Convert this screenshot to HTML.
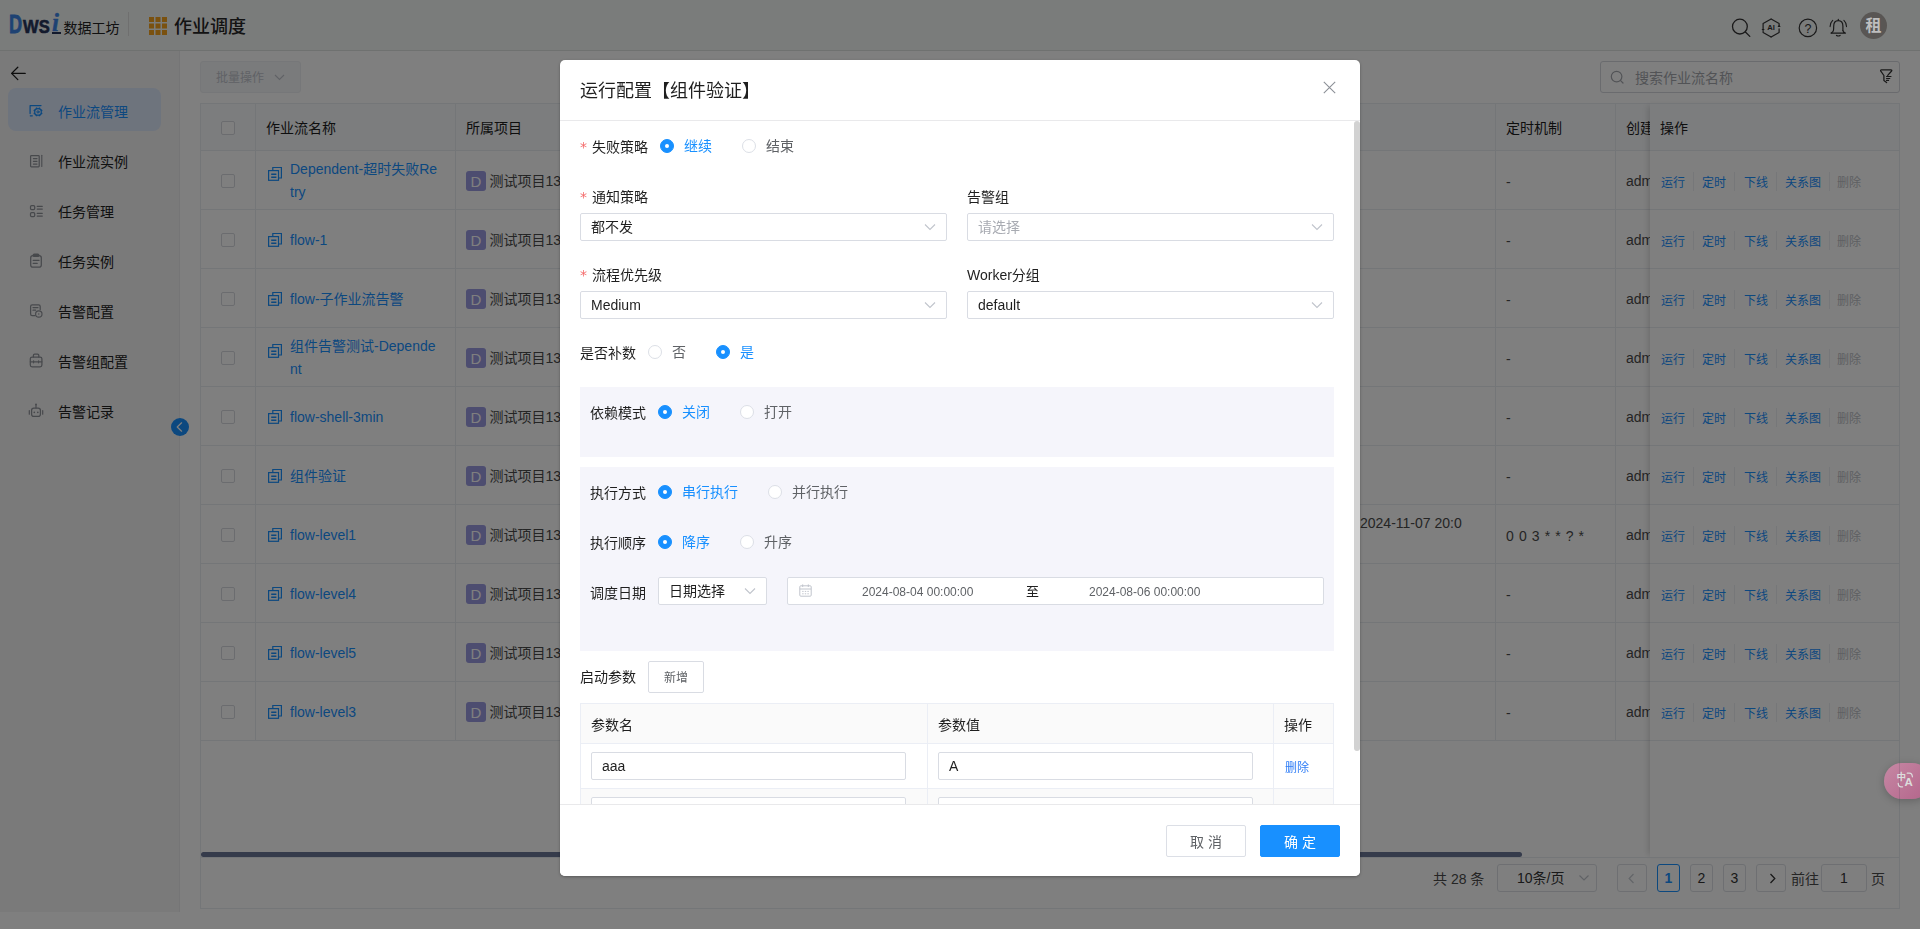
<!DOCTYPE html>
<html lang="zh-CN">
<head>
<meta charset="utf-8">
<title>作业调度</title>
<style>
*{box-sizing:border-box;margin:0;padding:0}
html,body{width:1920px;height:929px;overflow:hidden;background:#fff}
body{font-family:"Liberation Sans","Noto Sans CJK SC",sans-serif;font-size:14px;color:#333;position:relative}
svg{display:block}
/* ---------- header ---------- */
#hdr{position:absolute;left:0;top:0;width:1920px;height:51px;background:#f5f8f7;border-bottom:1px solid #dfe2e1;z-index:2}
#logo{position:absolute;left:9px;top:8px;height:30px;white-space:nowrap;line-height:30px}
#logo span{position:absolute;display:block;line-height:1}
#logo .d{font-family:"Liberation Sans",sans-serif;font-weight:bold;font-size:26px;color:#3d85e6;left:0px;top:3px;transform:scaleX(.7);transform-origin:0 50%;-webkit-text-stroke:.8px #3d85e6}
#logo .ws{font-family:"Liberation Sans",sans-serif;font-weight:bold;font-size:19px;color:#27345a;left:13.5px;top:9px;transform:scaleX(.87);transform-origin:0 50%;-webkit-text-stroke:.6px #27345a;letter-spacing:.3px}
#logo .i{font-family:"Liberation Serif",serif;font-style:italic;font-weight:bold;font-size:25px;color:#3d85e6;left:43px;top:2px;-webkit-text-stroke:.4px #3d85e6}
#logo .u{left:43px;top:24px;width:9px;height:1.5px;background:#27345a}
#logo .cn{left:54.5px;top:10px;font-size:14px;color:#222;letter-spacing:0;line-height:20px}
#hdr .vdiv{position:absolute;left:128px;top:12px;width:1px;height:24px;background:#dedede}
#hdr .grid{position:absolute;left:149px;top:17px}
#hdr .ttl{position:absolute;left:174px;top:13px;font-size:18px;line-height:28px;color:#262626;font-weight:500}
#hdr .ics{position:absolute;left:1725px;top:14px}
#ava{position:absolute;left:1860px;top:12px;width:27px;height:27px;border-radius:50%;background:#595654;color:#bebebe;font-size:16px;font-weight:bold;line-height:28px;text-align:center;z-index:6}
/* ---------- sidebar ---------- */
#side{position:absolute;left:0;top:51px;width:180px;height:861px;background:#f5f5f5;border-right:1px solid #ebebed}
#side .mi{position:absolute;left:8px;width:153px;height:43px;border-radius:8px;line-height:48px;font-size:14px;color:#222;padding-left:50px;white-space:nowrap}
#side .mi.on{background:#dde8fb;color:#1890ff}
#side .sic{position:absolute;left:0;top:0;z-index:1}
#coll{position:absolute;left:171px;top:418px;width:18px;height:18px;border-radius:50%;background:#1890ff}
#coll svg{position:absolute;left:5px;top:4px}
/* ---------- main ---------- */
#main{position:absolute;left:180px;top:51px;width:1740px;height:878px;background:#fff}
#card{position:absolute;left:20px;top:0;width:1700px;height:858px}
.btn-batch{position:absolute;left:0;top:10px;width:101px;height:32px;border-radius:3px;background:#f5f6f8;border:1px solid #eceef2;color:#c0c4cc;font-size:12px;line-height:32px;padding-left:15px}
.btn-batch svg{position:absolute;left:73px;top:12px}
.srch{position:absolute;left:1400px;top:10px;width:300px;height:32px;border:1px solid #d4d7dd;border-radius:3px;background:#fff}
.srch .ph{position:absolute;left:34px;top:1px;line-height:30px;font-size:14px;color:#a4a7ad;white-space:nowrap}
.srch svg{position:absolute}
/* table */
#tbl{position:absolute;left:0;top:52px;width:1700px;height:755px;border-top:1px solid #e9ecf1;border-left:1px solid #e9ecf1;border-right:1px solid #e9ecf1}
#tbl .hd{position:absolute;left:0;top:0;width:1698px;height:47px;background:#f8fafc;border-bottom:1px solid #e9ecf1}
#tbl .row{position:absolute;left:0;width:1698px;height:59px;border-bottom:1px solid #e9ecf1}
#tbl .vl{position:absolute;top:0;width:1px;height:637px;background:#e9ecf1}
#tbl .th{position:absolute;top:1px;line-height:47px;font-size:14px;color:#1c1c1c;white-space:nowrap}
.cb{position:absolute;left:20px;width:14px;height:14px;border:1px solid #d6d9df;border-radius:2px;background:#fff}
.nm{position:absolute;left:89px;width:150px;font-size:14px;line-height:23px;color:#1890ff;word-break:break-all}
.nmi{position:absolute;left:66px}
.pj{position:absolute;left:265px;width:20px;height:20px;border-radius:3px;background:#9a9ae0;color:#fff;font-size:15px;line-height:21px;text-align:center}
.pjt{position:absolute;left:288.5px;font-size:14px;line-height:20px;color:#4a4a4a;white-space:nowrap}
.cell{position:absolute;font-size:14px;line-height:20px;color:#4a4a4a;white-space:nowrap}
.adm{position:absolute;left:1425px;width:26px;overflow:hidden;font-size:14px;line-height:20px;color:#4a4a4a;white-space:nowrap}
#fix{position:absolute;left:1450px;top:52px;width:249px;height:755px;box-shadow:-5px 0 6px -3px rgba(0,0,0,.14);border-top:1px solid #e9ecf1}
#fix .hd{position:absolute;left:0;top:0;width:249px;height:47px;background:#f8fafc;border-bottom:1px solid #e9ecf1;line-height:49px;padding-left:10px;font-size:14px;color:#1c1c1c}
#fix .row{position:absolute;left:0;width:249px;height:59px;border-bottom:1px solid #e9ecf1;background:#fff}
.ops{position:absolute;left:0;width:252px;height:20px;font-size:12px;line-height:20px;white-space:nowrap}
.ops a{position:absolute;top:0;color:#1890ff;text-decoration:none}
.ops a.dis{color:#bcbfc5}
.ops i{position:absolute;top:-1px;width:1px;height:19px;background:#eceef2}
#hsb{position:absolute;left:1px;top:801px;width:1321px;height:5px;border-radius:3px;background:#6a7696}
/* pagination */
#pg{position:absolute;left:0;top:806px;width:1700px;height:52px;border:1px solid #e9ecf1;font-size:14px;color:#4a4a4a}
#pg .t{position:absolute;top:7px;line-height:28px;white-space:nowrap}
#pg .b{position:absolute;top:6px;height:28px;border:1px solid #dcdfe4;border-radius:3px;background:#fff;text-align:center;line-height:27px;font-size:14px;color:#333}
#pg .b.on{border-color:#1890ff;color:#1890ff;font-weight:bold}
#pg .b svg{position:absolute}
/* ---------- mask ---------- */
#mask{position:absolute;left:0;top:0;width:1920px;height:929px;background:rgba(0,0,0,.5);z-index:5}
#trans{position:absolute;left:1884px;top:763px;width:46px;height:36px;border-radius:18px;background:linear-gradient(135deg,#c688a4,#b3648a);box-shadow:0 2px 8px rgba(0,0,0,.22);z-index:7;color:#dcdcdc;font-weight:bold}
#trans span{position:absolute;line-height:1}
#trans i{position:absolute;left:15px;top:0;width:1px;height:36px;background:rgba(60,60,80,.18)}
#trans svg{position:absolute;left:0;top:0}

/* ---------- modal ---------- */
#modal{position:absolute;left:560px;top:60px;width:800px;height:816px;background:#fff;border-radius:5px;box-shadow:0 1px 3px rgba(0,0,0,.3);overflow:hidden;color:#1f1f1f;z-index:8;will-change:transform}
#modal .mh{position:absolute;left:0;top:0;width:800px;height:61px;border-bottom:1px solid #e9e9eb}
#modal .mh .tt{position:absolute;left:20px;top:17px;font-size:18px;line-height:28px;color:#1f1f1f;white-space:nowrap}
#modal .mh svg{position:absolute;left:763px;top:21px}
#modal .mf{position:absolute;left:0;top:744px;width:800px;height:72px;border-top:1px solid #e9e9eb;background:#fff}
#modal .mf .bt{position:absolute;top:20px;width:80px;height:32px;border-radius:2px;font-size:14px;line-height:32px;text-align:center;border:1px solid #dcdfe6;color:#5f6266;background:#fff;letter-spacing:0}
#modal .mf .bt.pr{background:#1890ff;border-color:#1890ff;color:#fff}
#mb{position:absolute;left:0;top:61px;width:800px;height:683px;overflow:hidden}
#mb .sb{position:absolute;left:794px;top:0;width:6px;height:630px;border-radius:3px;background:#d2d2d2}
#mb .lb{position:absolute;font-size:14px;line-height:20px;white-space:nowrap;color:#1f1f1f}
#mb .lb b{font-weight:normal;color:#f56c6c;font-family:"DejaVu Sans",sans-serif;font-size:14px;display:inline-block;width:12px;position:relative;top:0}
#mb .rd{position:absolute;width:14px;height:14px;border-radius:50%;border:1px solid #dcdfe6;background:#fff}
#mb .rd.on{border-color:#1890ff;background:#1890ff}
#mb .rd.on::after{content:"";position:absolute;left:4px;top:4px;width:4px;height:4px;border-radius:50%;background:#fff}
#mb .rt{position:absolute;font-size:14px;line-height:20px;color:#5f6266;white-space:nowrap}
#mb .rt.on{color:#1890ff}
#mb .sel{position:absolute;height:28px;border:1px solid #d9dce3;border-radius:2px;background:#fff;font-size:14px;line-height:27px;padding-left:10px;color:#1f1f1f;white-space:nowrap}
#mb .sel.ph{color:#a8abb2}
#mb .sel svg{position:absolute;right:10px;top:9px}
#mb .blk{position:absolute;left:20px;width:754px;background:#f5f5fb}
#mb .dt{position:absolute;font-size:12px;line-height:28px;color:#5f6266;white-space:nowrap}
#mb .pt{position:absolute;left:20px;top:582px;width:754px;height:120px;border:1px solid #ebeef5;border-bottom:0;border-right:0}
#mb .pt .c{position:absolute;border-right:1px solid #ebeef5;border-bottom:1px solid #ebeef5}
#mb .pt .h{background:#fafafa;font-size:14px;line-height:43px;padding-left:10px;color:#1f1f1f}
#mb .pt .in{position:absolute;left:10px;top:8px;height:28px;border:1px solid #d9dce3;border-radius:2px;background:#fff;font-size:14px;line-height:26px;padding-left:10px;color:#1f1f1f}
</style>
</head>
<body>
<div id="hdr">
  <div id="logo"><span class="d">D</span><span class="ws">WS</span><span class="i">i</span><span class="u"></span><span class="cn">数据工坊</span></div>
  <div class="vdiv"></div>
  <svg class="grid" width="18" height="18" viewBox="0 0 18 18"><g fill="#f5a31f"><rect x="0.0" y="0.0" width="5" height="5"/><rect x="6.5" y="0.0" width="5" height="5"/><rect x="13.0" y="0.0" width="5" height="5"/><rect x="0.0" y="6.5" width="5" height="5"/><rect x="6.5" y="6.5" width="5" height="5"/><rect x="13.0" y="6.5" width="5" height="5"/><rect x="0.0" y="13.0" width="5" height="5"/><rect x="6.5" y="13.0" width="5" height="5"/><rect x="13.0" y="13.0" width="5" height="5"/></g></svg>
  <div class="ttl">作业调度</div>
  <svg class="ics" width="125" height="26" viewBox="0 0 125 26" fill="none" stroke="#333" stroke-width="1.3" stroke-linecap="round" stroke-linejoin="round"><circle cx="14.9" cy="12.6" r="7.4"/><path d="M20.4 18.0 L24.8 22.4"/><path d="M38.1 15.1 L38.1 9.4 L46.1 4.9 M46.1 4.9 L54.1 9.4 L54.1 11.7 L54.1 11.7 M54.1 14.9 L54.1 18.4 L46.1 22.9" stroke-width="1.2"/><path d="M46.1 22.9 L38.1 18.4 L38.1 17.4" stroke-width="1.2"/><path d="M54.1 10.7 l1.6 2.4 l-3.2 0z M38.1 17.3 l1.6 -2.4 l-3.2 0z" fill="#333" stroke="none"/><text x="46.1" y="16.2" font-family="Liberation Sans, sans-serif" font-weight="bold" font-size="7.6" fill="#333" stroke="none" text-anchor="middle">AI</text><circle cx="82.9" cy="13.9" r="8.7" stroke-width="1.2"/><text x="82.9" y="18.5" font-family="Liberation Sans, sans-serif" font-size="12.5" fill="#333" stroke="none" text-anchor="middle">?</text><path d="M113.3 5.3 L113.3 6.6 M106.3 19.0 C108.7 17.6 108.7 16.5 108.7 12.2 C108.7 8.6 110.9 6.7 113.3 6.7 L113.3 6.7 M113.3 6.7 C115.7 6.7 117.9 8.6 117.9 12.2 L117.9 16.5" stroke-width="1.2"/><path d="M117.9 16.5 C117.9 17.6 118.9 18.4 120.3 19.0 M106.1 19.1 L120.5 19.1 M111.5 21.4 Q113.3 22.6 115.1 21.4" stroke-width="1.2"/><path d="M107.7 6.3 Q105.0 8.8 105.1 12.6 M118.9 6.3 Q121.6 8.8 121.5 12.6" stroke-width="1.1"/></svg>
</div>
<div id="ava">租</div>
<div id="side">
<svg class="sic" width="60" height="400" viewBox="0 0 60 400" fill="none" stroke="#8f9299" stroke-width="1.25" stroke-linecap="round" stroke-linejoin="round"><path d="M11.6 22.4 L25.2 22.4 M17.8 16.2 L11.6 22.4 L17.8 28.6" stroke="#1a1a1a" stroke-width="1.3"/><path d="M30.1 62.6 L30.1 54.5 L41.0 54.5 M30.3 64.8 L32.3 64.8" stroke="#1890ff"/><circle cx="38.0" cy="60.9" r="3.3" stroke="#1890ff" stroke-width="1.2"/><path d="M41.05 62.16 L42.25 62.66 M39.26 63.95 L39.76 65.15 M36.74 63.95 L36.24 65.15 M34.95 62.16 L33.75 62.66 M34.95 59.64 L33.75 59.14 M36.74 57.85 L36.24 56.65 M39.26 57.85 L39.76 56.65 M41.05 59.64 L42.25 59.14" stroke="#1890ff" stroke-width="1.7" stroke-linecap="butt"/><circle cx="38.0" cy="60.9" r="1.1" stroke="#1890ff" stroke-width="1"/><rect x="30.6" y="104.5" width="8.6" height="11.4" rx=".8"/><path d="M33.4 107.6 H37 M33.4 110.3 H37 M33.4 113.1 H37" stroke-width="1.2"/><path d="M41.8 104.2 V115.4" stroke-width="1.1"/><rect x="30.5" y="154.6" width="4.2" height="4" rx="1.1"/><rect x="30.5" y="161.6" width="4.2" height="4" rx="1.1"/><path d="M37.2 155.3 H42.3 M37.2 158.1 H42.3 M37.2 162.3 H42.3 M37.2 165.1 H42.3" stroke-width="1.2"/><rect x="30.7" y="204.6" width="10.6" height="11.6" rx="2.2"/><rect x="33.2" y="203.0" width="5.6" height="2.4" rx="1" fill="#8f9299"/><path d="M33.2 209.4 H39 M33.2 212.4 H37.2" stroke-width="1.2"/><path d="M35.0 264.6 H32.2 Q30.6 264.6 30.6 263.0 V255.4 Q30.6 253.8 32.2 253.8 H38.6 Q40.2 253.8 40.2 255.4 V258.6"/><path d="M33.0 256.6 H38 M33.0 259.2 H35.6" stroke-width="1.2"/><circle cx="38.8" cy="263.0" r="3.2" stroke-width="1.15"/><circle cx="38.8" cy="263.0" r=".7" fill="#8f9299" stroke="none"/><rect x="30.3" y="306.0" width="11.6" height="9.8" rx="1.8"/><path d="M33.4 306.0 V304.2 Q33.4 303.2 34.6 303.2 H37.6 Q38.8 303.2 38.8 304.2 V306.0"/><path d="M30.3 310.8 H41.9 M33.6 309.8 V311.8 M38.6 309.8 V311.8" stroke-width="1.15"/><rect x="31.6" y="357.0" width="8.8" height="8.4" rx="2.2"/><path d="M36.0 354.4 V357.0 M29.3 359.6 V363.2 M42.7 359.6 V363.2" stroke-width="1.2"/><circle cx="36" cy="353.6" r="1" fill="#8f9299" stroke="none"/><circle cx="34.3" cy="361.3" r=".85" fill="#8f9299" stroke="none"/><circle cx="37.8" cy="361.3" r=".85" fill="#8f9299" stroke="none"/></svg>
<div class="mi on" style="top:37px">作业流管理</div>
<div class="mi" style="top:87px">作业流实例</div>
<div class="mi" style="top:137px">任务管理</div>
<div class="mi" style="top:187px">任务实例</div>
<div class="mi" style="top:237px">告警配置</div>
<div class="mi" style="top:287px">告警组配置</div>
<div class="mi" style="top:337px">告警记录</div>
</div>
<div id="main">
  <div id="card">
    <div class="btn-batch">批量操作<svg width="11" height="7" viewBox="0 0 11 7" fill="none" stroke="#c0c4cc" stroke-width="1.1"><path d="M1 1l4.5 4.5L10 1"/></svg></div>
    <div class="srch"><svg style="left:9px;top:8px" width="15" height="15" viewBox="0 0 15 15" fill="none" stroke="#a4a7ad" stroke-width="1.2" stroke-linecap="round"><circle cx="6.6" cy="6.6" r="5.3"/><path d="M10.6 10.6l2.4 2.4"/></svg><span class="ph">搜索作业流名称</span><svg style="left:279px;top:7px" width="14" height="16" viewBox="0 0 14 16" fill="none" stroke="#333" stroke-width="1.25" stroke-linejoin="round" stroke-linecap="round"><path d="M7.7 6.4L11.6 2Q12.2 .9 10.9 .9H1.4Q.2 .9 .8 2.1L3.9 6.5V11.4L6.6 13.5"/><path d="M6.5 7.5H11M6.5 9.5H9.8M6.5 11.4H8.6" stroke-width="1.1"/></svg></div>
    <div id="tbl"><div class="hd"></div>
<div class="cb" style="top:17px"></div>
<div class="th" style="left:65px">作业流名称</div>
<div class="th" style="left:265px">所属项目</div>
<div class="th" style="left:1305px">定时机制</div>
<div class="th" style="left:1425px;width:26px;overflow:hidden">创建人</div>
<div class="vl" style="left:54px"></div>
<div class="vl" style="left:254px"></div>
<div class="vl" style="left:1294px"></div>
<div class="vl" style="left:1414px"></div>
<div class="row" style="top:47px"></div>
<div class="cb" style="top:70px"></div>
<svg class="nmi" style="top:62px" width="16" height="16" viewBox="0 0 16 16" fill="none" stroke="#1890ff" stroke-width="1.2"><path d="M5.8 4.4V1.5h8.6V12h-2.7"/><rect x="1.6" y="4.6" width="9.9" height="9.7"/><path d="M4.2 8.2h5.2M4.2 11.2h5.2" stroke-width="1.5"/></svg>
<div class="nm" style="top:54px">Dependent-超时失败Re<br>try</div>
<div class="pj" style="top:67px">D</div>
<div class="pjt" style="top:67px">测试项目1375</div>
<div class="cell" style="left:1305px;top:68px;word-spacing:1.2px">-</div>
<div class="adm" style="top:67px">admin</div>
<div class="row" style="top:106px"></div>
<div class="cb" style="top:129px"></div>
<svg class="nmi" style="top:128px" width="16" height="16" viewBox="0 0 16 16" fill="none" stroke="#1890ff" stroke-width="1.2"><path d="M5.8 4.4V1.5h8.6V12h-2.7"/><rect x="1.6" y="4.6" width="9.9" height="9.7"/><path d="M4.2 8.2h5.2M4.2 11.2h5.2" stroke-width="1.5"/></svg>
<div class="nm" style="top:125px">flow-1</div>
<div class="pj" style="top:126px">D</div>
<div class="pjt" style="top:126px">测试项目1375</div>
<div class="cell" style="left:1305px;top:127px;word-spacing:1.2px">-</div>
<div class="adm" style="top:126px">admin</div>
<div class="row" style="top:165px"></div>
<div class="cb" style="top:188px"></div>
<svg class="nmi" style="top:187px" width="16" height="16" viewBox="0 0 16 16" fill="none" stroke="#1890ff" stroke-width="1.2"><path d="M5.8 4.4V1.5h8.6V12h-2.7"/><rect x="1.6" y="4.6" width="9.9" height="9.7"/><path d="M4.2 8.2h5.2M4.2 11.2h5.2" stroke-width="1.5"/></svg>
<div class="nm" style="top:184px">flow-子作业流告警</div>
<div class="pj" style="top:185px">D</div>
<div class="pjt" style="top:185px">测试项目1375</div>
<div class="cell" style="left:1305px;top:186px;word-spacing:1.2px">-</div>
<div class="adm" style="top:185px">admin</div>
<div class="row" style="top:224px"></div>
<div class="cb" style="top:247px"></div>
<svg class="nmi" style="top:239px" width="16" height="16" viewBox="0 0 16 16" fill="none" stroke="#1890ff" stroke-width="1.2"><path d="M5.8 4.4V1.5h8.6V12h-2.7"/><rect x="1.6" y="4.6" width="9.9" height="9.7"/><path d="M4.2 8.2h5.2M4.2 11.2h5.2" stroke-width="1.5"/></svg>
<div class="nm" style="top:231px">组件告警测试-Depende<br>nt</div>
<div class="pj" style="top:244px">D</div>
<div class="pjt" style="top:244px">测试项目1375</div>
<div class="cell" style="left:1305px;top:245px;word-spacing:1.2px">-</div>
<div class="adm" style="top:244px">admin</div>
<div class="row" style="top:283px"></div>
<div class="cb" style="top:306px"></div>
<svg class="nmi" style="top:305px" width="16" height="16" viewBox="0 0 16 16" fill="none" stroke="#1890ff" stroke-width="1.2"><path d="M5.8 4.4V1.5h8.6V12h-2.7"/><rect x="1.6" y="4.6" width="9.9" height="9.7"/><path d="M4.2 8.2h5.2M4.2 11.2h5.2" stroke-width="1.5"/></svg>
<div class="nm" style="top:302px">flow-shell-3min</div>
<div class="pj" style="top:303px">D</div>
<div class="pjt" style="top:303px">测试项目1375</div>
<div class="cell" style="left:1305px;top:304px;word-spacing:1.2px">-</div>
<div class="adm" style="top:303px">admin</div>
<div class="row" style="top:342px"></div>
<div class="cb" style="top:365px"></div>
<svg class="nmi" style="top:364px" width="16" height="16" viewBox="0 0 16 16" fill="none" stroke="#1890ff" stroke-width="1.2"><path d="M5.8 4.4V1.5h8.6V12h-2.7"/><rect x="1.6" y="4.6" width="9.9" height="9.7"/><path d="M4.2 8.2h5.2M4.2 11.2h5.2" stroke-width="1.5"/></svg>
<div class="nm" style="top:361px">组件验证</div>
<div class="pj" style="top:362px">D</div>
<div class="pjt" style="top:362px">测试项目1375</div>
<div class="cell" style="left:1305px;top:363px;word-spacing:1.2px">-</div>
<div class="adm" style="top:362px">admin</div>
<div class="row" style="top:401px"></div>
<div class="cb" style="top:424px"></div>
<svg class="nmi" style="top:423px" width="16" height="16" viewBox="0 0 16 16" fill="none" stroke="#1890ff" stroke-width="1.2"><path d="M5.8 4.4V1.5h8.6V12h-2.7"/><rect x="1.6" y="4.6" width="9.9" height="9.7"/><path d="M4.2 8.2h5.2M4.2 11.2h5.2" stroke-width="1.5"/></svg>
<div class="nm" style="top:420px">flow-level1</div>
<div class="pj" style="top:421px">D</div>
<div class="pjt" style="top:421px">测试项目1375</div>
<div class="cell" style="left:1305px;top:422px;word-spacing:1.2px">0 0 3 * * ? *</div>
<div class="cell" style="left:1159px;top:409px">2024-11-07 20:0</div>
<div class="adm" style="top:421px">admin</div>
<div class="row" style="top:460px"></div>
<div class="cb" style="top:483px"></div>
<svg class="nmi" style="top:482px" width="16" height="16" viewBox="0 0 16 16" fill="none" stroke="#1890ff" stroke-width="1.2"><path d="M5.8 4.4V1.5h8.6V12h-2.7"/><rect x="1.6" y="4.6" width="9.9" height="9.7"/><path d="M4.2 8.2h5.2M4.2 11.2h5.2" stroke-width="1.5"/></svg>
<div class="nm" style="top:479px">flow-level4</div>
<div class="pj" style="top:480px">D</div>
<div class="pjt" style="top:480px">测试项目1375</div>
<div class="cell" style="left:1305px;top:481px;word-spacing:1.2px">-</div>
<div class="adm" style="top:480px">admin</div>
<div class="row" style="top:519px"></div>
<div class="cb" style="top:542px"></div>
<svg class="nmi" style="top:541px" width="16" height="16" viewBox="0 0 16 16" fill="none" stroke="#1890ff" stroke-width="1.2"><path d="M5.8 4.4V1.5h8.6V12h-2.7"/><rect x="1.6" y="4.6" width="9.9" height="9.7"/><path d="M4.2 8.2h5.2M4.2 11.2h5.2" stroke-width="1.5"/></svg>
<div class="nm" style="top:538px">flow-level5</div>
<div class="pj" style="top:539px">D</div>
<div class="pjt" style="top:539px">测试项目1375</div>
<div class="cell" style="left:1305px;top:540px;word-spacing:1.2px">-</div>
<div class="adm" style="top:539px">admin</div>
<div class="row" style="top:578px"></div>
<div class="cb" style="top:601px"></div>
<svg class="nmi" style="top:600px" width="16" height="16" viewBox="0 0 16 16" fill="none" stroke="#1890ff" stroke-width="1.2"><path d="M5.8 4.4V1.5h8.6V12h-2.7"/><rect x="1.6" y="4.6" width="9.9" height="9.7"/><path d="M4.2 8.2h5.2M4.2 11.2h5.2" stroke-width="1.5"/></svg>
<div class="nm" style="top:597px">flow-level3</div>
<div class="pj" style="top:598px">D</div>
<div class="pjt" style="top:598px">测试项目1375</div>
<div class="cell" style="left:1305px;top:599px;word-spacing:1.2px">-</div>
<div class="adm" style="top:598px">admin</div></div>
    <div id="fix"><div class="hd">操作</div>
<div class="row" style="top:47px"></div>
<div class="ops" style="top:69px"><a style="left:11px">运行</a><i style="left:43px"></i><a style="left:52px">定时</a><i style="left:84px"></i><a style="left:94px">下线</a><i style="left:126px"></i><a style="left:135px">关系图</a><i style="left:179px"></i><a class="dis" style="left:187px">删除</a></div>
<div class="row" style="top:106px"></div>
<div class="ops" style="top:128px"><a style="left:11px">运行</a><i style="left:43px"></i><a style="left:52px">定时</a><i style="left:84px"></i><a style="left:94px">下线</a><i style="left:126px"></i><a style="left:135px">关系图</a><i style="left:179px"></i><a class="dis" style="left:187px">删除</a></div>
<div class="row" style="top:165px"></div>
<div class="ops" style="top:187px"><a style="left:11px">运行</a><i style="left:43px"></i><a style="left:52px">定时</a><i style="left:84px"></i><a style="left:94px">下线</a><i style="left:126px"></i><a style="left:135px">关系图</a><i style="left:179px"></i><a class="dis" style="left:187px">删除</a></div>
<div class="row" style="top:224px"></div>
<div class="ops" style="top:246px"><a style="left:11px">运行</a><i style="left:43px"></i><a style="left:52px">定时</a><i style="left:84px"></i><a style="left:94px">下线</a><i style="left:126px"></i><a style="left:135px">关系图</a><i style="left:179px"></i><a class="dis" style="left:187px">删除</a></div>
<div class="row" style="top:283px"></div>
<div class="ops" style="top:305px"><a style="left:11px">运行</a><i style="left:43px"></i><a style="left:52px">定时</a><i style="left:84px"></i><a style="left:94px">下线</a><i style="left:126px"></i><a style="left:135px">关系图</a><i style="left:179px"></i><a class="dis" style="left:187px">删除</a></div>
<div class="row" style="top:342px"></div>
<div class="ops" style="top:364px"><a style="left:11px">运行</a><i style="left:43px"></i><a style="left:52px">定时</a><i style="left:84px"></i><a style="left:94px">下线</a><i style="left:126px"></i><a style="left:135px">关系图</a><i style="left:179px"></i><a class="dis" style="left:187px">删除</a></div>
<div class="row" style="top:401px"></div>
<div class="ops" style="top:423px"><a style="left:11px">运行</a><i style="left:43px"></i><a style="left:52px">定时</a><i style="left:84px"></i><a style="left:94px">下线</a><i style="left:126px"></i><a style="left:135px">关系图</a><i style="left:179px"></i><a class="dis" style="left:187px">删除</a></div>
<div class="row" style="top:460px"></div>
<div class="ops" style="top:482px"><a style="left:11px">运行</a><i style="left:43px"></i><a style="left:52px">定时</a><i style="left:84px"></i><a style="left:94px">下线</a><i style="left:126px"></i><a style="left:135px">关系图</a><i style="left:179px"></i><a class="dis" style="left:187px">删除</a></div>
<div class="row" style="top:519px"></div>
<div class="ops" style="top:541px"><a style="left:11px">运行</a><i style="left:43px"></i><a style="left:52px">定时</a><i style="left:84px"></i><a style="left:94px">下线</a><i style="left:126px"></i><a style="left:135px">关系图</a><i style="left:179px"></i><a class="dis" style="left:187px">删除</a></div>
<div class="row" style="top:578px"></div>
<div class="ops" style="top:600px"><a style="left:11px">运行</a><i style="left:43px"></i><a style="left:52px">定时</a><i style="left:84px"></i><a style="left:94px">下线</a><i style="left:126px"></i><a style="left:135px">关系图</a><i style="left:179px"></i><a class="dis" style="left:187px">删除</a></div></div>
    <div id="hsb"></div>
    <div id="pg"><span class="t" style="left:1232px">共 28 条</span>
<div class="b" style="left:1296px;width:100px;text-align:left;padding-left:19px">10条/页<svg style="left:80px;top:9px" width="12" height="8" viewBox="0 0 12 8" fill="none" stroke="#c0c4cc" stroke-width="1.2"><path d="M1.5 1.5L6 6l4.5-4.5"/></svg></div>
<div class="b" style="left:1416px;width:30px"><svg style="left:10px;top:8px" width="7" height="11" viewBox="0 0 7 11" fill="none" stroke="#c8ccd2" stroke-width="1.3"><path d="M5.5 1L1.2 5.5 5.5 10"/></svg></div>
<div class="b on" style="left:1456px;width:23px">1</div>
<div class="b" style="left:1489px;width:23px">2</div>
<div class="b" style="left:1522px;width:23px">3</div>
<div class="b" style="left:1555px;width:30px"><svg style="left:12px;top:8px" width="7" height="11" viewBox="0 0 7 11" fill="none" stroke="#333" stroke-width="1.3"><path d="M1.5 1l4.3 4.5L1.5 10"/></svg></div>
<span class="t" style="left:1590px">前往</span>
<div class="b" style="left:1620px;width:46px">1</div>
<span class="t" style="left:1670px">页</span></div>
  </div>
</div>
<div id="coll"><svg width="7" height="10" viewBox="0 0 7 10" fill="none" stroke="#fff" stroke-width="1.2" stroke-linecap="round" stroke-linejoin="round"><path d="M5.6 .8L1.2 5l4.4 4.2"/></svg></div>
<div id="mask"></div>
<div id="trans"><i></i><span style="left:12.5px;top:8.5px;font-size:9.5px">中</span><span style="left:20.5px;top:14px;font-size:11.5px;font-family:'Liberation Sans',sans-serif">A</span><svg width="46" height="36" viewBox="0 0 46 36" fill="none" stroke="#dcdcdc" stroke-width="1.2" stroke-linecap="round"><path d="M23.2 10.2h2.2q2.6 0 3 3.6"/><path d="M14.2 20.4q.2 3.4 3 3.4h1.4"/></svg></div>
<div id="modal">
<div class="mh"><div class="tt">运行配置【组件验证】</div><svg width="13" height="13" viewBox="0 0 13 13" fill="none" stroke="#8c9097" stroke-width="1.1"><path d="M.8.8l11.4 11.4M12.2.8L.8 12.2"/></svg></div>
<div id="mb">
<div class="lb" style="left:20px;top:16px"><b>*</b>失败策略</div>
<div class="rd on" style="left:100px;top:18px"></div><span class="rt on" style="left:124px;top:15px">继续</span>
<div class="rd" style="left:182px;top:18px"></div><span class="rt" style="left:206px;top:15px">结束</span>
<div class="lb" style="left:20px;top:66px"><b>*</b>通知策略</div>
<div class="sel" style="left:20px;top:92px;width:367px">都不发<svg width="12" height="8" viewBox="0 0 12 8" fill="none" stroke="#c0c4cc" stroke-width="1.1"><path d="M1 1.5l5 5 5-5"/></svg></div>
<div class="lb" style="left:407px;top:66px">告警组</div>
<div class="sel ph" style="left:407px;top:92px;width:367px">请选择<svg width="12" height="8" viewBox="0 0 12 8" fill="none" stroke="#c0c4cc" stroke-width="1.1"><path d="M1 1.5l5 5 5-5"/></svg></div>
<div class="lb" style="left:20px;top:144px"><b>*</b>流程优先级</div>
<div class="sel" style="left:20px;top:170px;width:367px">Medium<svg width="12" height="8" viewBox="0 0 12 8" fill="none" stroke="#c0c4cc" stroke-width="1.1"><path d="M1 1.5l5 5 5-5"/></svg></div>
<div class="lb" style="left:407px;top:144px">Worker分组</div>
<div class="sel" style="left:407px;top:170px;width:367px">default<svg width="12" height="8" viewBox="0 0 12 8" fill="none" stroke="#c0c4cc" stroke-width="1.1"><path d="M1 1.5l5 5 5-5"/></svg></div>
<div class="lb" style="left:20px;top:222px">是否补数</div>
<div class="rd" style="left:88px;top:224px"></div><span class="rt" style="left:112px;top:221px">否</span>
<div class="rd on" style="left:156px;top:224px"></div><span class="rt on" style="left:180px;top:221px">是</span>
<div class="blk" style="top:266px;height:70px"></div>
<div class="lb" style="left:30px;top:282px">依赖模式</div>
<div class="rd on" style="left:98px;top:284px"></div><span class="rt on" style="left:122px;top:281px">关闭</span>
<div class="rd" style="left:180px;top:284px"></div><span class="rt" style="left:204px;top:281px">打开</span>
<div class="blk" style="top:346px;height:184px"></div>
<div class="lb" style="left:30px;top:362px">执行方式</div>
<div class="rd on" style="left:98px;top:364px"></div><span class="rt on" style="left:122px;top:361px">串行执行</span>
<div class="rd" style="left:208px;top:364px"></div><span class="rt" style="left:232px;top:361px">并行执行</span>
<div class="lb" style="left:30px;top:412px">执行顺序</div>
<div class="rd on" style="left:98px;top:414px"></div><span class="rt on" style="left:122px;top:411px">降序</span>
<div class="rd" style="left:180px;top:414px"></div><span class="rt" style="left:204px;top:411px">升序</span>
<div class="lb" style="left:30px;top:462px">调度日期</div>
<div class="sel" style="left:98px;top:456px;width:109px">日期选择<svg width="12" height="8" viewBox="0 0 12 8" fill="none" stroke="#c0c4cc" stroke-width="1.1"><path d="M1 1.5l5 5 5-5"/></svg></div>
<div class="sel" style="left:227px;top:456px;width:537px;padding:0"><svg style="position:absolute;left:11px;top:6px;right:auto" width="13" height="13" viewBox="0 0 13 13" fill="none" stroke="#c0c4cc" stroke-width="1"><rect x=".8" y="1.8" width="11.4" height="10.4" rx="1"/><path d="M.8 5h11.4M3.7.4v2.6M9.3.4v2.6M3.2 7.4h1.4M5.8 7.4h1.4M8.4 7.4h1.4M3.2 9.8h1.4M5.8 9.8h1.4M8.4 9.8h1.4"/></svg><span class="dt" style="left:74px;top:0">2024-08-04 00:00:00</span><span class="dt" style="left:238px;top:0;font-size:13px;color:#1f1f1f">至</span><span class="dt" style="left:301px;top:0">2024-08-06 00:00:00</span></div>
<div class="lb" style="left:20px;top:546px">启动参数</div>
<div class="sel" style="left:88px;top:540px;width:56px;height:32px;line-height:33px;padding:0;text-align:center;font-size:12px;color:#5f6266">新增</div>
<div class="pt">
<div class="c h" style="left:0;top:0;width:347px;height:40px">参数名</div>
<div class="c h" style="left:347px;top:0;width:346px;height:40px">参数值</div>
<div class="c h" style="left:693px;top:0;width:60px;height:40px">操作</div>
<div class="c" style="left:0;top:40px;width:347px;height:45px"><div class="in" style="width:315px">aaa</div></div>
<div class="c" style="left:347px;top:40px;width:346px;height:45px"><div class="in" style="width:315px">A</div></div>
<div class="c" style="left:693px;top:40px;width:60px;height:45px"><span style="position:absolute;left:11px;top:14px;font-size:12px;line-height:20px;color:#2f7df6">删除</span></div>
<div class="c" style="left:0;top:85px;width:347px;height:45px;background:#fafafa"><div class="in" style="width:315px">bbb</div></div>
<div class="c" style="left:347px;top:85px;width:346px;height:45px;background:#fafafa"><div class="in" style="width:315px">B</div></div>
<div class="c" style="left:693px;top:85px;width:60px;height:45px;background:#fafafa"><span style="position:absolute;left:11px;top:14px;font-size:12px;line-height:20px;color:#2f7df6">删除</span></div>
</div>
<div class="sb"></div>
</div>
<div class="mf"><div class="bt" style="left:606px">取 消</div><div class="bt pr" style="left:700px">确 定</div></div>
</div><!--/modal-->
</body>
</html>
